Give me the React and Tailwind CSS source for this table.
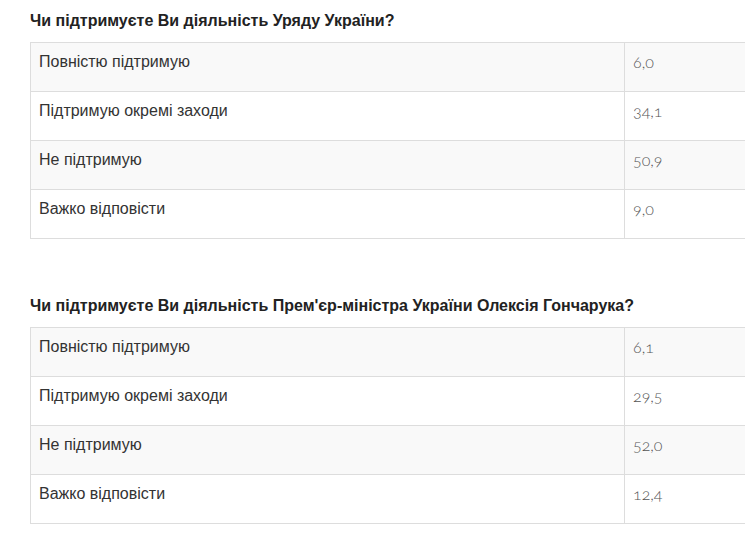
import React from "react";

const polls = [
  {
    title: "Чи підтримуєте Ви діяльність Уряду України?",
    rows: [
      ["Повністю підтримую", "6,0"],
      ["Підтримую окремі заходи", "34,1"],
      ["Не підтримую", "50,9"],
      ["Важко відповісти", "9,0"],
    ],
  },
  {
    title: "Чи підтримуєте Ви діяльність Прем'єр-міністра України Олексія Гончарука?",
    rows: [
      ["Повністю підтримую", "6,1"],
      ["Підтримую окремі заходи", "29,5"],
      ["Не підтримую", "52,0"],
      ["Важко відповісти", "12,4"],
    ],
  },
];

const PollTable = ({ title, rows }) => {
  return (
    <div>
      <h3 className="h-[42px] pt-[10px] text-[16px] font-bold leading-[21px] text-[#222]">{title}</h3>
      <div className="w-[740px] border-l border-t border-[#ddd]">
        {rows.map(([label, value], i) => (
          <div key={label} className={`flex h-[49px] border-b border-[#ddd] ${i % 2 === 0 ? "bg-[#f9f9f9]" : "bg-white"}`}>
            <div className="w-[594px] border-r border-[#ddd] px-2 pt-[8px] text-[16px] leading-[21px] text-[#333]">{label}</div>
            <div
              className="flex-1 px-2 pt-[8px] text-[16px] font-light leading-[21px] text-[#555] oldstyle-nums"
              style={{ fontFamily: "Lato, sans-serif" }}
            >
              {value}
            </div>
          </div>
        ))}
      </div>
    </div>
  );
};

export default function App() {
  return (
    <div className="h-[534px] w-full overflow-hidden bg-white pl-[30px]" style={{ fontFamily: "'Liberation Sans', Arial, sans-serif" }}>
      <PollTable {...polls[0]} />
      <div className="h-[46px]" />
      <PollTable {...polls[1]} />
    </div>
  );
}
